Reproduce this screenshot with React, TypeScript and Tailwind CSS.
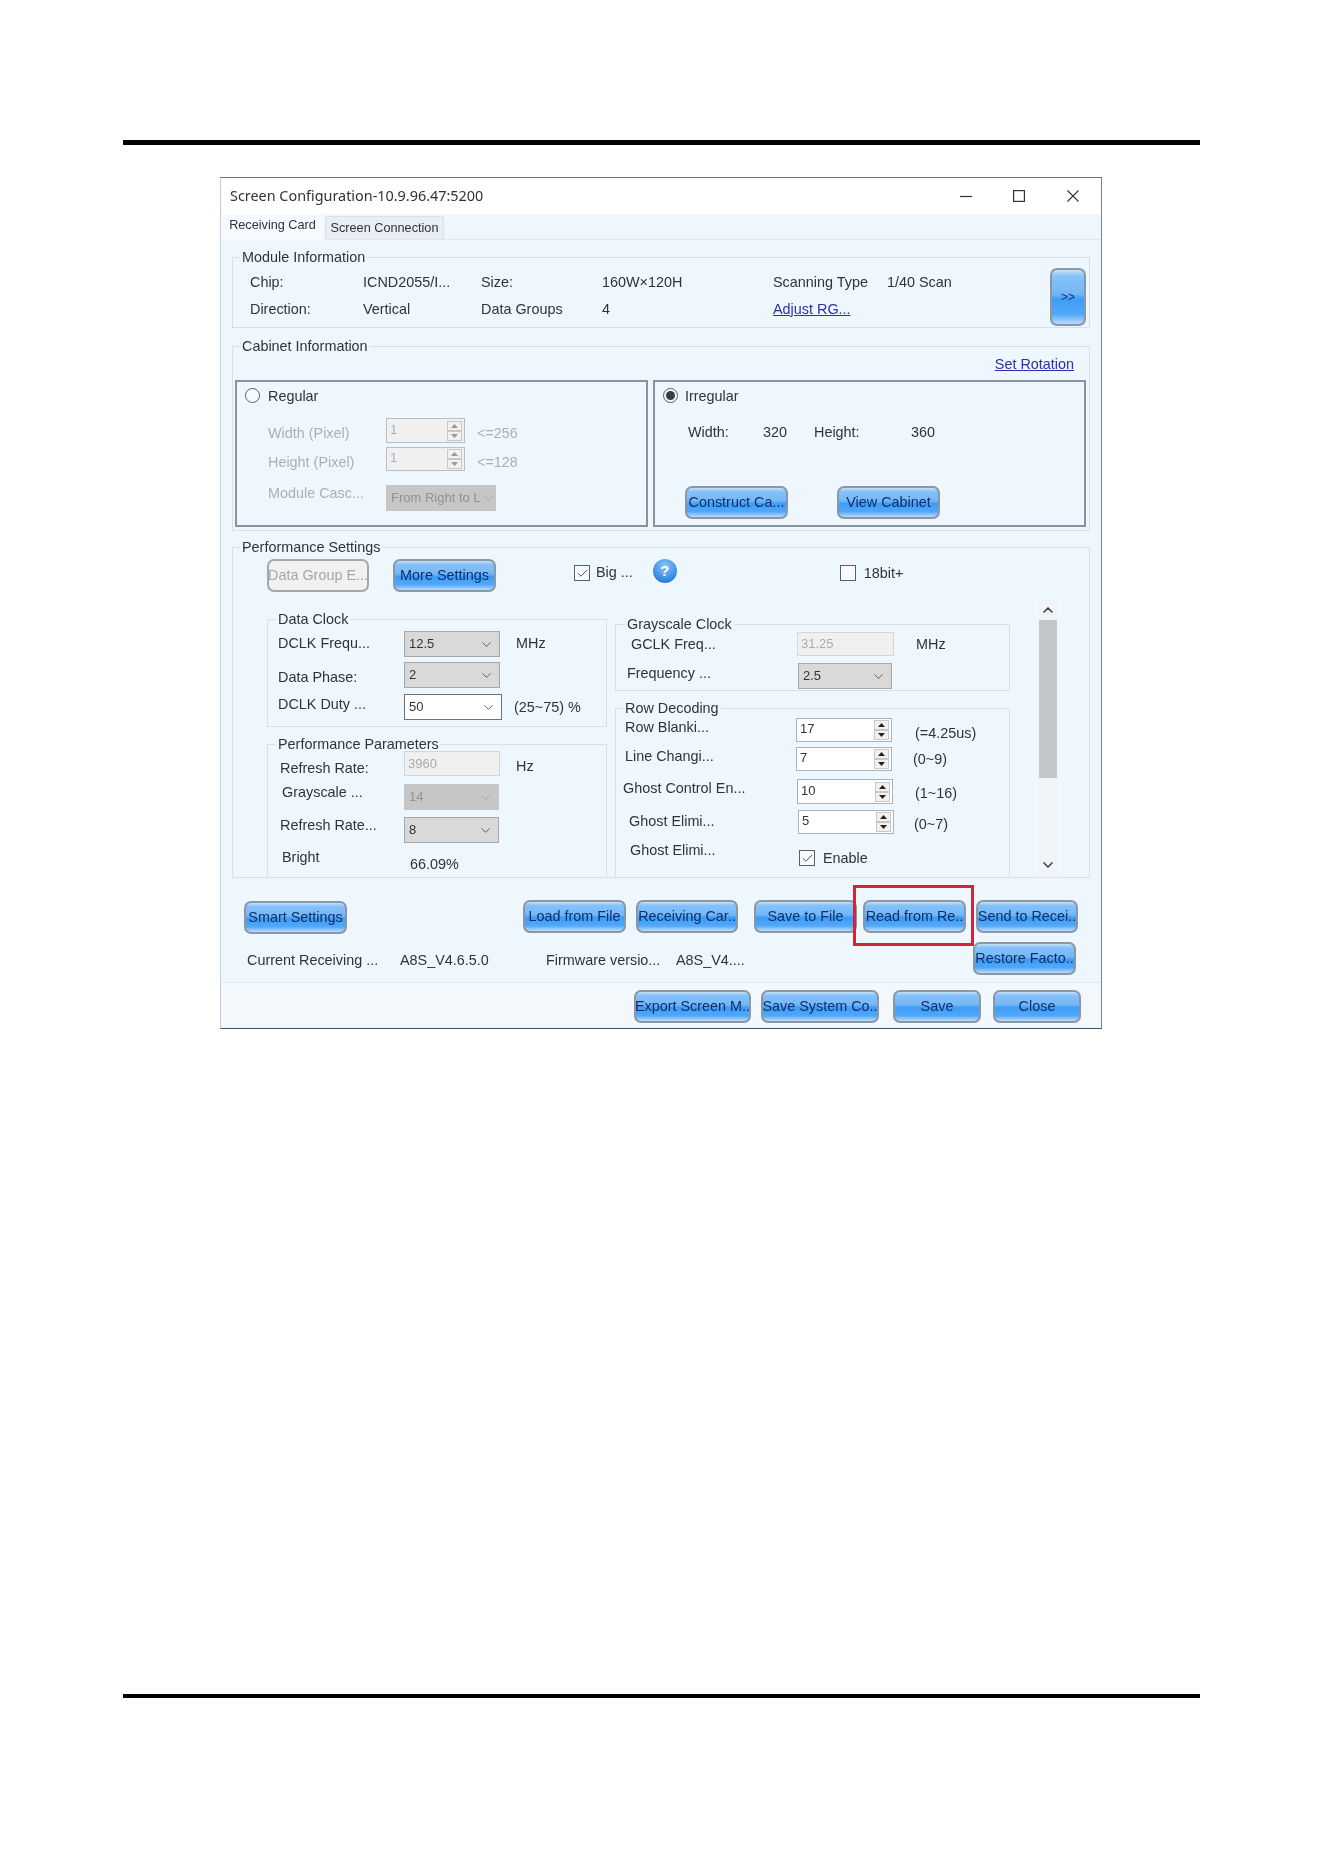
import type { ReactNode } from 'react';
import { ChevronDown, ChevronUp, Check } from 'lucide-react';

const Txt = ({ className = '', children }: { className?: string; children: ReactNode }) => (
	<span className={`block h-4 shrink-0 whitespace-nowrap leading-4 ${className}`}>{children}</span>
);

const Group = ({ title, className = '', legendClass = 'ml-[7px]', children }: { title: string; className?: string; legendClass?: string; children: ReactNode }) => (
	<fieldset className={`min-w-0 shrink-0 border border-[#d6e0e9] ${className}`}>
		<legend className={`h-4 px-[2px] leading-4 ${legendClass}`}>{title}</legend>
		{children}
	</fieldset>
);

const Btn = ({ className = '', children }: { className?: string; children: ReactNode }) => (
	<button className={`flex h-[33px] shrink-0 items-center justify-center overflow-hidden whitespace-nowrap rounded-[7px] border-2 border-[#8b97a3] bg-[linear-gradient(#c4e1fb_0%,#86c1f8_12%,#74b7f7_44%,#3d9cf7_54%,#52a8f8_82%,#bcdcfb_100%)] text-[#0c2f68] ${className}`}>
		{children}
	</button>
);

const Select = ({ value, className = '', tone = 'normal' }: { value: string; className?: string; tone?: 'normal' | 'white' | 'off' }) => {
	const toneClass = tone === 'white' ? 'bg-white border-[#6f7478]' : tone === 'off' ? 'bg-[#c6c6c6] border-[#c6c6c6] text-[#8f9396]' : 'bg-[#d9d9d9] border-[#a8a8a8]';
	return (
		<div className={`flex h-[26px] shrink-0 items-center justify-between overflow-hidden border pl-[4px] pr-[5px] text-[13px] ${toneClass} ${className}`}>
			<span className="whitespace-nowrap">{value}</span>
			<ChevronDown size={15} strokeWidth={1.5} className={tone === 'off' ? 'shrink-0 text-[#a8a8a8]' : 'shrink-0 text-[#555]'} />
		</div>
	);
};

const Spin = ({ value, className = '', off = false }: { value: string; className?: string; off?: boolean }) => (
	<div className={`flex h-6 shrink-0 items-center justify-between border pl-[3px] pr-[2px] text-[13px] ${off ? 'border-[#b9bec3] bg-[#f0f0f0] text-[#a9aeb3]' : 'border-[#aab3bb] bg-white'} ${className}`}>
		<span className="-mt-[2px]">{value}</span>
		<svg width="15" height="20" viewBox="0 0 15 20" className="shrink-0">
			<rect x="0.5" y="0.5" width="14" height="9" fill="#f1f1f1" stroke="#c8c8c8" />
			<rect x="0.5" y="10.5" width="14" height="9" fill="#f1f1f1" stroke="#c8c8c8" />
			<path d="M7.5 3L11 7H4z" fill={off ? '#999' : '#222'} />
			<path d="M7.5 17L11 13H4z" fill={off ? '#999' : '#222'} />
		</svg>
	</div>
);

const Input = ({ value, className = '' }: { value: string; className?: string }) => (
	<div className={`flex h-6 shrink-0 items-center border border-[#d4d6d8] bg-[#f0f0f0] pl-[3px] text-[13px] text-[#a7abaf] ${className}`}>{value}</div>
);

const Radio = ({ on = false, className = '' }: { on?: boolean; className?: string }) => (
	<div className={`flex h-[15px] w-[15px] shrink-0 items-center justify-center rounded-full border border-[#555c63] bg-[#f7fbff] ${className}`}>
		{on && <div className="h-[9px] w-[9px] rounded-full bg-[#3a3f45]" />}
	</div>
);

const CheckBox = ({ on = false, className = '' }: { on?: boolean; className?: string }) => (
	<div className={`flex h-[16px] w-[16px] shrink-0 items-center justify-center border border-[#5a6066] bg-[#f7fbff] ${className}`}>
		{on && <Check size={13} strokeWidth={1.6} className="text-[#333]" />}
	</div>
);

const Link = ({ children }: { children: ReactNode }) => <span className="text-[#2a2fb0] underline">{children}</span>;

export default function App() {
	return (
		<div className="flex h-[1872px] w-[1324px] flex-col overflow-hidden bg-white pt-[140px] font-['Liberation_Sans',Arial,sans-serif] text-[14.4px] text-[#30343a]">
			<div className="ml-[123px] h-[5px] w-[1077px] bg-black" />

			<div className="relative ml-[220px] mt-[32px] h-[852px] w-[882px] shrink-0 border border-[#c9ced3] border-r-[#7d8287] border-t-[#6e7378] border-b-[#4c5055] bg-[#eef6fe] blur-[0.35px]">
				{/* title bar */}
				<div className="flex h-[36px] items-center bg-white pl-[9px] pr-[22px] font-['Noto_Sans',sans-serif] text-[14.4px] text-[#333]">
					<span>Screen Configuration-10.9.96.47:5200</span>
					<svg width="12" height="12" viewBox="0 0 12 12" className="ml-auto" stroke="#333" strokeWidth="1.2" fill="none">
						<path d="M0 6.5H12" />
					</svg>
					<svg width="12" height="12" viewBox="0 0 12 12" className="ml-[41px]" stroke="#333" strokeWidth="1.2" fill="none">
						<rect x="0.6" y="0.6" width="10.8" height="10.8" />
					</svg>
					<svg width="12" height="12" viewBox="0 0 12 12" className="ml-[42px]" stroke="#333" strokeWidth="1.1" fill="none">
						<path d="M0.5 0.5L11.5 11.5M11.5 0.5L0.5 11.5" />
					</svg>
				</div>

				{/* tabs */}
				<div className="flex h-[26px] border-b border-[#dfe6ec] text-[12.7px]">
					<div className="flex h-[26px] w-[103px] items-center justify-center bg-[#f5faff] pb-[3px]">Receiving Card</div>
					<div className="ml-[1px] mt-[2px] flex h-[23px] w-[119px] items-center justify-center border border-b-0 border-[#dde1e5] bg-[#e8eef3] pt-[1px]">Screen Connection</div>
				</div>

				<div className="ml-[11px] mt-[9px] flex w-[858px] flex-col">
					<Group title="Module Information" className="h-[79px]">
						<div className="flex">
							<div className="pl-[17px] pt-[9px]">
								<div className="flex h-[27px]">
									<Txt className="w-[113px]">Chip:</Txt>
									<Txt className="w-[118px]">ICND2055/I...</Txt>
									<Txt className="w-[121px]">Size:</Txt>
									<Txt className="w-[171px]">160W×120H</Txt>
									<Txt className="w-[114px]">Scanning Type</Txt>
									<Txt>1/40 Scan</Txt>
								</div>
								<div className="flex h-[27px]">
									<Txt className="w-[113px]">Direction:</Txt>
									<Txt className="w-[118px]">Vertical</Txt>
									<Txt className="w-[121px]">Data Groups</Txt>
									<Txt className="w-[171px]">4</Txt>
									<Txt>
										<Link>Adjust RG...</Link>
									</Txt>
								</div>
							</div>
							<Btn className="ml-auto mr-[3px] mt-[3px] h-[58px] w-[36px] text-[12px]">&gt;&gt;</Btn>
						</div>
					</Group>

					<Group title="Cabinet Information" className="mt-[10px] h-[193px]">
						<div className="flex h-[26px] justify-end pr-[15px] pt-[2px]">
							<Txt>
								<Link>Set Rotation</Link>
							</Txt>
						</div>
						<div className="ml-[2px] flex gap-[5px]">
							<div className="h-[147px] w-[413px] border-2 border-[#8794a0] text-[#a9b1b8]">
								<div className="flex h-[29px] text-[#30343a]">
									<Radio className="ml-[8px] mt-[6px]" />
									<Txt className="ml-[8px] mt-[6px]">Regular</Txt>
								</div>
								<div className="mt-[7px] flex">
									<Txt className="ml-[31px] mt-[7px] w-[118px]">Width (Pixel)</Txt>
									<Spin value="1" off className="h-[25px] w-[79px]" />
									<Txt className="ml-[12px] mt-[7px]">&lt;=256</Txt>
								</div>
								<div className="mt-[4px] flex">
									<Txt className="ml-[31px] mt-[7px] w-[118px]">Height (Pixel)</Txt>
									<Spin value="1" off className="w-[79px]" />
									<Txt className="ml-[12px] mt-[7px]">&lt;=128</Txt>
								</div>
								<div className="mt-[14px] flex">
									<Txt className="ml-[31px] w-[118px]">Module Casc...</Txt>
									<Select value="From Right to L" tone="off" className="h-[25px] w-[110px]" />
								</div>
							</div>
							<div className="h-[147px] w-[433px] border-2 border-[#8794a0]">
								<div className="flex h-[29px]">
									<Radio on className="ml-[8px] mt-[6px]" />
									<Txt className="ml-[7px] mt-[6px]">Irregular</Txt>
								</div>
								<div className="mt-[13px] flex">
									<Txt className="ml-[33px] w-[75px]">Width:</Txt>
									<Txt className="w-[51px]">320</Txt>
									<Txt className="w-[97px]">Height:</Txt>
									<Txt>360</Txt>
								</div>
								<div className="ml-[30px] mt-[46px] flex gap-[49px]">
									<Btn className="w-[103px]">Construct Ca...</Btn>
									<Btn className="w-[103px]">View Cabinet</Btn>
								</div>
							</div>
						</div>
					</Group>

					<Group title="Performance Settings" className="mt-[8px] h-[339px]">
						<div className="mt-[4px] flex h-[33px]">
							<button className="ml-[34px] flex h-[33px] w-[102px] shrink-0 items-center justify-center overflow-hidden whitespace-nowrap rounded-[7px] border-2 border-[#a3a8ad] bg-[#f1f1f1] text-[#a2a7ac]">Data Group E...</button>
							<Btn className="ml-[24px] w-[103px]">More Settings</Btn>
							<CheckBox on className="ml-[78px] mt-[6px]" />
							<Txt className="ml-[6px] mt-[5px]">Big ...</Txt>
							<div className="ml-[20px] flex h-[24px] w-[24px] shrink-0 items-center justify-center rounded-full bg-[radial-gradient(circle_at_50%_30%,#8cc8f7,#2f86e0_70%,#1f6cc6)] text-[15px] font-bold text-white">?</div>
							<CheckBox className="ml-[163px] mt-[6px]" />
							<Txt className="ml-[8px] mt-[6px]">18bit+</Txt>
						</div>

						<div className="mt-[8px] flex h-[277px] overflow-hidden">
							{/* left column */}
							<div className="ml-[34px] mt-[11px] flex w-[340px] shrink-0 flex-col">
								<Group title="Data Clock" className="h-[116px]" legendClass="ml-[8px]">
									<div className="mt-[4px] flex">
										<Txt className="ml-[10px] mt-[4px] w-[126px]">DCLK Frequ...</Txt>
										<Select value="12.5" className="w-[96px]" />
										<Txt className="ml-[16px] mt-[4px]">MHz</Txt>
									</div>
									<div className="mt-[5px] flex">
										<Txt className="ml-[10px] mt-[7px] w-[126px]">Data Phase:</Txt>
										<Select value="2" className="w-[96px]" />
									</div>
									<div className="mt-[6px] flex">
										<Txt className="ml-[10px] mt-[2px] w-[126px]">DCLK Duty ...</Txt>
										<Select value="50" tone="white" className="w-[98px]" />
										<Txt className="ml-[12px] mt-[5px]">(25~75) %</Txt>
									</div>
								</Group>
								<Group title="Performance Parameters" className="mt-[9px] h-[170px]" legendClass="ml-[8px]">
									<div className="-mt-[1px] flex">
										<Txt className="ml-[12px] mt-[9px] w-[124px]">Refresh Rate:</Txt>
										<Input value="3960" className="h-[25px] w-[96px]" />
										<Txt className="ml-[16px] mt-[7px]">Hz</Txt>
									</div>
									<div className="mt-[8px] flex">
										<Txt className="ml-[14px] w-[122px]">Grayscale ...</Txt>
										<Select value="14" tone="off" className="w-[95px]" />
									</div>
									<div className="mt-[7px] flex">
										<Txt className="ml-[12px] w-[124px]">Refresh Rate...</Txt>
										<Select value="8" className="w-[95px]" />
									</div>
									<div className="mt-[6px] flex">
										<Txt className="ml-[14px] w-[128px]">Bright</Txt>
										<Txt className="mt-[7px]">66.09%</Txt>
									</div>
								</Group>
							</div>

							{/* right column */}
							<div className="ml-[8px] mt-[16px] flex w-[395px] shrink-0 flex-col">
								<Group title="Grayscale Clock" className="h-[75px]" legendClass="ml-[9px]">
									<div className="flex">
										<Txt className="ml-[15px] mt-[4px] w-[166px]">GCLK Freq...</Txt>
										<Input value="31.25" className="w-[97px]" />
										<Txt className="ml-[22px] mt-[4px]">MHz</Txt>
									</div>
									<div className="mt-[7px] flex">
										<Txt className="ml-[11px] mt-[2px] w-[171px]">Frequency ...</Txt>
										<Select value="2.5" className="w-[94px]" />
									</div>
								</Group>
								<Group title="Row Decoding" className="mt-[9px] h-[190px]" legendClass="ml-[7px]">
									<div className="mt-[2px] flex">
										<Txt className="ml-[9px] mt-[1px] w-[171px]">Row Blanki...</Txt>
										<Spin value="17" className="w-[96px]" />
										<Txt className="ml-[23px] mt-[7px]">(=4.25us)</Txt>
									</div>
									<div className="mt-[5px] flex">
										<Txt className="ml-[9px] mt-[1px] w-[171px]">Line Changi...</Txt>
										<Spin value="7" className="w-[96px]" />
										<Txt className="ml-[21px] mt-[4px]">(0~9)</Txt>
									</div>
									<div className="mt-[8px] flex">
										<Txt className="ml-[7px] mt-[1px] w-[174px]">Ghost Control En...</Txt>
										<Spin value="10" className="h-[25px] w-[96px]" />
										<Txt className="ml-[22px] mt-[6px]">(1~16)</Txt>
									</div>
									<div className="mt-[6px] flex">
										<Txt className="ml-[13px] mt-[3px] w-[169px]">Ghost Elimi...</Txt>
										<Spin value="5" className="w-[96px]" />
										<Txt className="ml-[20px] mt-[6px]">(0~7)</Txt>
									</div>
									<div className="mt-[8px] flex">
										<Txt className="ml-[14px] w-[169px]">Ghost Elimi...</Txt>
										<CheckBox on className="mt-[8px]" />
										<Txt className="ml-[8px] mt-[8px]">Enable</Txt>
									</div>
								</Group>
							</div>

							{/* scrollbar */}
							<div className="ml-[29px] flex h-[277px] w-[18px] shrink-0 flex-col items-center bg-[#f0f4f8]">
								<ChevronUp size={16} strokeWidth={2.5} className="mt-[2px] h-[16px] shrink-0 text-[#444]" />
								<div className="mt-[2px] h-[158px] w-[18px] shrink-0 bg-[#c4c6c8]" />
								<ChevronDown size={16} strokeWidth={2.5} className="mt-auto mb-[4px] shrink-0 text-[#444]" />
							</div>
						</div>
					</Group>
				</div>

				{/* bottom actions */}
				<div className="mt-[22px] flex h-[34px] pl-[23px]">
					<Btn className="mt-[1px] w-[103px]">Smart Settings</Btn>
					<Btn className="ml-[176px] w-[103px]">Load from File</Btn>
					<Btn className="ml-[10px] w-[102px]">Receiving Car..</Btn>
					<Btn className="ml-[16px] w-[103px]">Save to File</Btn>
					<Btn className="ml-[6px] w-[103px]">Read from Re..</Btn>
					<Btn className="ml-[10px] w-[102px]">Send to Recei..</Btn>
				</div>
				<div className="mt-[8px] flex h-[33px]">
					<Txt className="ml-[26px] mt-[10px] w-[153px]">Current Receiving ...</Txt>
					<Txt className="mt-[10px] w-[146px]">A8S_V4.6.5.0</Txt>
					<Txt className="mt-[10px] w-[130px]">Firmware versio...</Txt>
					<Txt className="mt-[10px] w-[297px]">A8S_V4....</Txt>
					<Btn className="w-[103px]">Restore Facto..</Btn>
				</div>

				<div className="mt-[7px] flex h-[44px] justify-end gap-[10px] border-t border-[#dfe6ec] bg-[#f3f8fd] pr-[20px] pt-[7px]">
					<Btn className="w-[117px]">Export Screen M..</Btn>
					<Btn className="w-[118px]">Save System Co..</Btn>
					<Btn className="ml-[4px] w-[88px]">Save</Btn>
					<Btn className="ml-[2px] w-[88px]">Close</Btn>
				</div>

				{/* red highlight over the read button */}
				<div className="absolute left-[632px] top-[707px] h-[61px] w-[121px] border-[3px] border-[#d0263c]" />
			</div>

			<div className="ml-[123px] mt-[665px] h-[4px] w-[1077px] bg-black" />
		</div>
	);
}
